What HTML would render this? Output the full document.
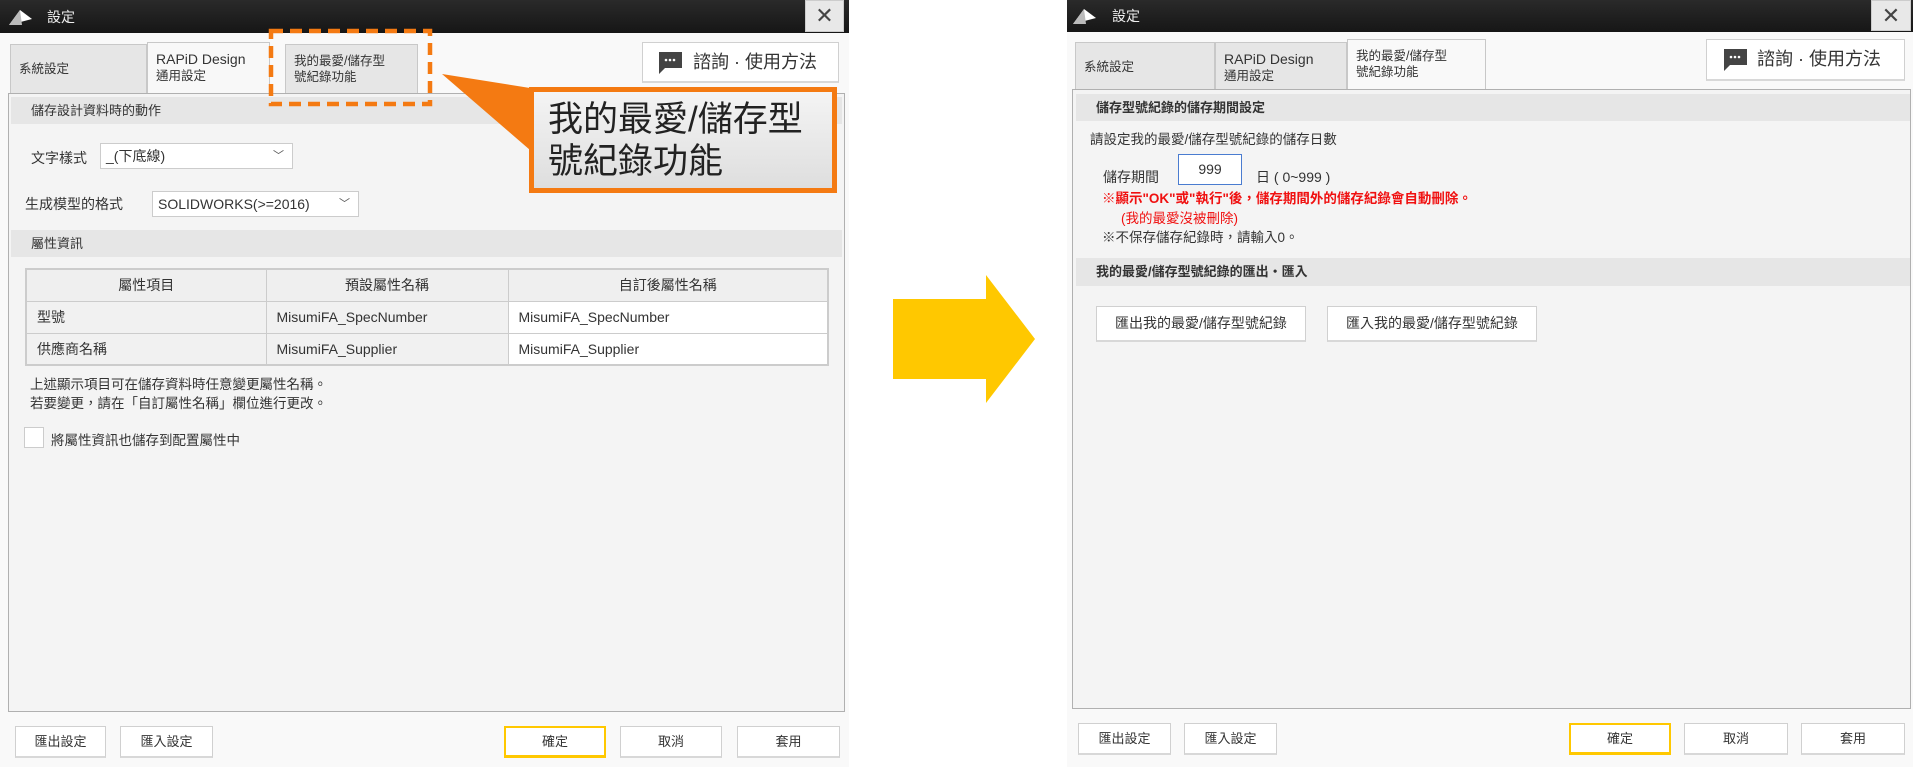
<!DOCTYPE html>
<html><head><meta charset="utf-8"><style>
*{box-sizing:border-box;margin:0;padding:0}
body{width:1913px;height:767px;background:#fff;position:relative;overflow:hidden;font-family:"Liberation Sans","Noto Sans CJK TC",sans-serif;font-size:14px;color:#333}
.a{position:absolute}
.title{background:linear-gradient(#2a2a2a,#161616);height:33px}
.title span{color:#eee;font-size:14px;top:7px}
.close{background:#e8e8e8;border:1px solid #ccc;color:#444;font-size:22px;text-align:center;line-height:30px}
.win{background:#f9f9f9}
.tab{background:#e6e6e6;border:1px solid #c8c8c8;border-bottom:none;font-size:12.5px;line-height:16px;padding:8px 8px;color:#333}
.tab.act{background:#f8f8f8}
.panel{background:#f4f4f4;border:1px solid #b0b0b0}
.hdr{background:#e6e6e6;height:27px;line-height:27px;padding-left:20px;font-size:13px}
.btn{background:#fff;border:1px solid #d0d0d0;border-bottom:2px solid #d8d8d8;text-align:center;font-size:13px;color:#333}
.sel{background:#fff;border:1px solid #ccc;padding-left:5px;line-height:24px;font-size:14px}
.sel i{position:absolute;right:8px;top:0;font-style:normal;color:#555;font-size:11px}
td{border:1px solid #ccc;height:32px;font-size:14px;padding-left:10px}
</style></head><body>
<!-- LEFT -->
<div class="a win" style="left:0;top:0;width:849px;height:767px"></div>
<div class="a title" style="left:0;top:0;width:849px"></div>
<svg class="a" style="left:8px;top:8px" width="26" height="18" viewBox="0 0 26 18"><path d="M1 17 L12 2 L24 11 Z" fill="#fff"/><path d="M12 2 L14 17 L1 17Z" fill="#bbb"/></svg>
<span class="a" style="left:47px;top:7px;color:#eee">設定</span>
<div class="a close" style="left:805px;top:0;width:39px;height:32px">✕</div>
<div class="a tab" style="left:10px;top:44px;width:137px;height:49px;padding-top:16px">系統設定</div>
<div class="a tab act" style="left:147px;top:42px;width:123px;height:51px"><span style="font-size:14px">RAPiD Design</span><br>通用設定</div>
<div class="a tab" style="left:285px;top:44px;width:133px;height:49px">我的最愛/儲存型<br>號紀錄功能</div>
<div class="a btn" style="left:642px;top:42px;width:197px;height:41px;line-height:38px;font-size:18px;text-align:left;padding-left:50px">諮詢 · 使用方法</div>
<svg class="a" style="left:657px;top:51px" width="26" height="24"><path d="M1 1h24v16H8l-6 6V1z" fill="#444"/><circle cx="9" cy="9" r="1.3" fill="#fff"/><circle cx="13" cy="9" r="1.3" fill="#fff"/><circle cx="17" cy="9" r="1.3" fill="#fff"/></svg>
<div class="a panel" style="left:8px;top:93px;width:837px;height:619px"></div>
<div class="a hdr" style="left:11px;top:97px;width:831px">儲存設計資料時的動作</div>
<span class="a" style="left:31px;top:148px">文字樣式</span>
<div class="a sel" style="left:100px;top:143px;width:193px;height:26px">_(下底線)<i>﹀</i></div>
<span class="a" style="left:25px;top:194px">生成模型的格式</span>
<div class="a sel" style="left:152px;top:191px;width:207px;height:26px">SOLIDWORKS(&gt;=2016)<i>﹀</i></div>
<div class="a hdr" style="left:11px;top:230px;width:831px">屬性資訊</div>
<table class="a" style="left:25px;top:268px;width:804px;border-collapse:collapse;border:2px solid #ccc">
<tr style="background:#efefef"><td style="width:240px;text-align:center;padding:0">屬性項目</td><td style="width:242px;text-align:center;padding:0">預設屬性名稱</td><td style="text-align:center;padding:0">自訂後屬性名稱</td></tr>
<tr><td style="background:#f1f1f1">型號</td><td style="background:#f1f1f1">MisumiFA_SpecNumber</td><td style="background:#fff">MisumiFA_SpecNumber</td></tr>
<tr><td style="background:#f1f1f1">供應商名稱</td><td style="background:#f1f1f1">MisumiFA_Supplier</td><td style="background:#fff">MisumiFA_Supplier</td></tr>
</table>
<div class="a" style="left:30px;top:375px;font-size:13.5px;line-height:19px">上述顯示項目可在儲存資料時任意變更屬性名稱。<br>若要變更，請在「自訂屬性名稱」欄位進行更改。</div>
<div class="a" style="left:24px;top:427px;width:20px;height:21px;background:#fff;border:1px solid #ccc"></div>
<span class="a" style="left:51px;top:429px;font-size:13.5px">將屬性資訊也儲存到配置屬性中</span>
<div class="a btn" style="left:15px;top:726px;width:91px;height:32px;line-height:29px">匯出設定</div>
<div class="a btn" style="left:120px;top:726px;width:93px;height:32px;line-height:29px">匯入設定</div>
<div class="a btn" style="left:504px;top:726px;width:102px;height:32px;line-height:28px;border:2px solid #ffc800;border-bottom:3px solid #ffc800">確定</div>
<div class="a btn" style="left:620px;top:726px;width:102px;height:32px;line-height:29px">取消</div>
<div class="a btn" style="left:737px;top:726px;width:103px;height:32px;line-height:29px">套用</div>
<!-- callout -->
<svg class="a" style="left:268px;top:28px" width="580" height="170"><rect x="3" y="3" width="159" height="73" fill="none" stroke="#f47a12" stroke-width="4.5" stroke-dasharray="12 7"/><path d="M174 46 L262 60 L262 122Z" fill="#f47a12"/></svg>
<div class="a" style="left:529px;top:87px;width:308px;height:106px;border:5px solid #f47a12;background:linear-gradient(#f4f4f4,#dedede);font-size:35px;line-height:42px;padding:7px 0 0 14px;color:#222">我的最愛/儲存型<br>號紀錄功能</div>
<!-- arrow -->
<svg class="a" style="left:893px;top:275px" width="145" height="130"><path d="M0 24 H93 V0 L142 64 L93 128 V104 H0Z" fill="#ffc800"/></svg>
<!-- RIGHT -->
<div class="a win" style="left:1067px;top:0;width:846px;height:767px"></div>
<div class="a title" style="left:1067px;top:0;width:846px;height:32px"></div>
<svg class="a" style="left:1072px;top:7px" width="26" height="18" viewBox="0 0 26 18"><path d="M1 17 L12 2 L24 11 Z" fill="#fff"/><path d="M12 2 L14 17 L1 17Z" fill="#bbb"/></svg>
<span class="a" style="left:1112px;top:6px;color:#eee">設定</span>
<div class="a close" style="left:1871px;top:0;width:40px;height:31px">✕</div>
<div class="a tab" style="left:1075px;top:42px;width:140px;height:47px;padding-top:16px">系統設定</div>
<div class="a tab" style="left:1215px;top:42px;width:132px;height:47px"><span style="font-size:14px">RAPiD Design</span><br>通用設定</div>
<div class="a tab act" style="left:1347px;top:39px;width:139px;height:51px;background:#f9f9f9">我的最愛/儲存型<br>號紀錄功能</div>
<div class="a btn" style="left:1706px;top:39px;width:199px;height:42px;line-height:39px;font-size:18px;text-align:left;padding-left:50px">諮詢 · 使用方法</div>
<svg class="a" style="left:1722px;top:48px" width="26" height="24"><path d="M1 1h24v16H8l-6 6V1z" fill="#444"/><circle cx="9" cy="9" r="1.3" fill="#fff"/><circle cx="13" cy="9" r="1.3" fill="#fff"/><circle cx="17" cy="9" r="1.3" fill="#fff"/></svg>
<div class="a panel" style="left:1072px;top:89px;width:839px;height:620px"></div>
<div class="a hdr" style="left:1076px;top:94px;width:834px;font-weight:bold">儲存型號紀錄的儲存期間設定</div>
<span class="a" style="left:1090px;top:128px;font-size:13.5px">請設定我的最愛/儲存型號紀錄的儲存日數</span>
<span class="a" style="left:1103px;top:167px">儲存期間</span>
<div class="a" style="left:1178px;top:154px;width:64px;height:31px;background:#fff;border:1px solid #4a7cd0;text-align:center;line-height:28px">999</div>
<span class="a" style="left:1256px;top:167px">日 ( 0~999 )</span>
<span class="a" style="left:1102px;top:187px;color:#f01010;font-weight:bold;font-size:13.5px">※顯示"OK"或"執行"後，儲存期間外的儲存紀錄會自動刪除。</span>
<span class="a" style="left:1121px;top:207px;color:#f01010;font-size:13.5px">(我的最愛沒被刪除)</span>
<span class="a" style="left:1102px;top:226px;font-size:13.5px">※不保存儲存紀錄時，請輸入0。</span>
<div class="a hdr" style="left:1076px;top:258px;width:834px;height:28px;font-weight:bold">我的最愛/儲存型號紀錄的匯出・匯入</div>
<div class="a btn" style="left:1096px;top:306px;width:210px;height:36px;line-height:33px;font-size:14px">匯出我的最愛/儲存型號紀錄</div>
<div class="a btn" style="left:1327px;top:306px;width:210px;height:36px;line-height:33px;font-size:14px">匯入我的最愛/儲存型號紀錄</div>
<div class="a btn" style="left:1078px;top:723px;width:93px;height:32px;line-height:29px">匯出設定</div>
<div class="a btn" style="left:1184px;top:723px;width:93px;height:32px;line-height:29px">匯入設定</div>
<div class="a btn" style="left:1569px;top:723px;width:102px;height:32px;line-height:28px;border:2px solid #ffc800;border-bottom:3px solid #ffc800">確定</div>
<div class="a btn" style="left:1684px;top:723px;width:104px;height:32px;line-height:29px">取消</div>
<div class="a btn" style="left:1801px;top:723px;width:104px;height:32px;line-height:29px">套用</div>
</body></html>
